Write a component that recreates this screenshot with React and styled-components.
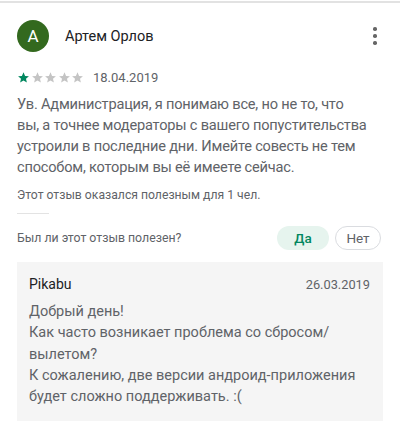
import React from "react";
import styled, { createGlobalStyle } from "styled-components";

const GlobalStyle = createGlobalStyle`
  html, body {
    margin: 0;
    padding: 0;
    background: #fff;
  }
  body {
    font-family: Roboto, "Noto Sans", Arial, sans-serif;
    -webkit-font-smoothing: antialiased;
  }
`;

function Star({ filled }) {
  return (
    <StarIcon viewBox="0 0 24 24" $filled={filled}>
      <path d="M12 2.5l2.9 6.6 7.1.6-5.4 4.7 1.6 7-6.2-3.8-6.2 3.8 1.6-7L2 9.7l7.1-.6z" />
    </StarIcon>
  );
}

function App() {
  const rating = 1;
  return (
    <Page>
      <GlobalStyle />
      <TopRule />
      <Review>
        <Header>
          <Avatar>A</Avatar>
          <Author>Артем Орлов</Author>
          <MoreButton aria-label="more">
            <Dot />
            <Dot />
            <Dot />
          </MoreButton>
        </Header>
        <MetaRow>
          <Stars>
            {[1, 2, 3, 4, 5].map((i) => (
              <Star key={i} filled={i <= rating} />
            ))}
          </Stars>
          <ReviewDate>18.04.2019</ReviewDate>
        </MetaRow>
        <Body>
          Ув. Администрация, я понимаю все, но не то, что
          <br />
          вы, а точнее модераторы с вашего попустительства устроили в
          последние дни. Имейте совесть не тем способом, которым вы её имеете
          сейчас.
        </Body>
        <Helpful>Этот отзыв оказался полезным для 1 чел.</Helpful>
        <ShortRule />
        <QuestionRow>
          <Question>Был ли этот отзыв полезен?</Question>
          <Choices>
            <Choice $active>Да</Choice>
            <Choice>Нет</Choice>
          </Choices>
        </QuestionRow>
        <Reply>
          <ReplyHeader>
            <ReplyAuthor>Pikabu</ReplyAuthor>
            <ReplyDate>26.03.2019</ReplyDate>
          </ReplyHeader>
          <ReplyText>
            Добрый день!
            <br />
            Как часто возникает проблема со сбросом/ вылетом?
            <br />
            К сожалению, две версии андроид-приложения будет сложно
            поддерживать. :(
          </ReplyText>
        </Reply>
      </Review>
    </Page>
  );
}

const Page = styled.div`
  width: 400px;
  height: 437px;
  overflow: hidden;
  background: #fff;
`;
const TopRule = styled.div`
  height: 2px;
  margin-top: 1px;
  background: #e2e2e2;
`;
const Review = styled.div`
  padding: 17px 17px 0 17px;
`;
const Header = styled.div`
  display: flex;
  align-items: center;
  height: 32px;
`;
const Avatar = styled.div`
  width: 32px;
  height: 32px;
  border-radius: 50%;
  background: #33691e;
  color: #fff;
  display: flex;
  align-items: center;
  justify-content: center;
  font-size: 17px;
  margin-right: 16px;
`;
const Author = styled.div`
  flex: 1;
  font-size: 14.5px;
  color: #202124;
`;
const MoreButton = styled.div`
  display: flex;
  flex-direction: column;
  align-items: center;
  gap: 3.5px;
  width: 10px;
  margin-right: 3px;
`;
const Dot = styled.span`
  width: 3.5px;
  height: 3.5px;
  border-radius: 50%;
  background: #666;
`;
const MetaRow = styled.div`
  display: flex;
  align-items: center;
  margin-top: 15px;
  height: 20px;
`;
const Stars = styled.div`
  display: flex;
  gap: 0.5px;
  margin-right: 9px;
`;
const StarIcon = styled.svg`
  width: 13px;
  height: 13px;
  fill: ${(p) => (p.$filled ? "#01875f" : "#c4c4c4")};
`;
const ReviewDate = styled.div`
  font-size: 13px;
  color: #5f6368;
`;
const Body = styled.p`
  margin: 7px 0 0 0;
  font-size: 14.6px;
  letter-spacing: -0.2px;
  line-height: 21px;
  color: #5f6368;
`;
const Helpful = styled.div`
  margin-top: 8px;
  font-size: 12.2px;
  line-height: 18px;
  color: #5f6368;
`;
const ShortRule = styled.div`
  width: 32px;
  height: 1px;
  background: #e3e3e3;
  margin-top: 9px;
`;
const QuestionRow = styled.div`
  display: flex;
  align-items: center;
  justify-content: space-between;
  margin-top: 12px;
`;
const Question = styled.div`
  font-size: 12.3px;
  color: #5f6368;
`;
const Choices = styled.div`
  display: flex;
  gap: 6px;
  margin-right: 2px;
`;
const Choice = styled.div`
  height: 24px;
  min-width: ${(p) => (p.$active ? "52px" : "46px")};
  box-sizing: border-box;
  border-radius: 12px;
  display: flex;
  align-items: center;
  justify-content: center;
  font-size: 13.5px;
  background: ${(p) => (p.$active ? "#e6f4ee" : "#fff")};
  color: ${(p) => (p.$active ? "#01875f" : "#5f6368")};
  border: ${(p) => (p.$active ? "none" : "1px solid #dadce0")};
  font-weight: ${(p) => (p.$active ? 500 : 400)};
`;
const Reply = styled.div`
  margin-top: 12px;
  background: #f5f5f5;
  padding: 14px 13px 12px 12px;
  height: 159px;
  box-sizing: border-box;
`;
const ReplyHeader = styled.div`
  display: flex;
  justify-content: space-between;
  align-items: center;
`;
const ReplyAuthor = styled.div`
  font-size: 14px;
  color: #202124;
`;
const ReplyDate = styled.div`
  font-size: 12.8px;
  color: #5f6368;
`;
const ReplyText = styled.div`
  margin-top: 9px;
  font-size: 14.5px;
  line-height: 21.3px;
  color: #5f6368;
`;

export default App;
